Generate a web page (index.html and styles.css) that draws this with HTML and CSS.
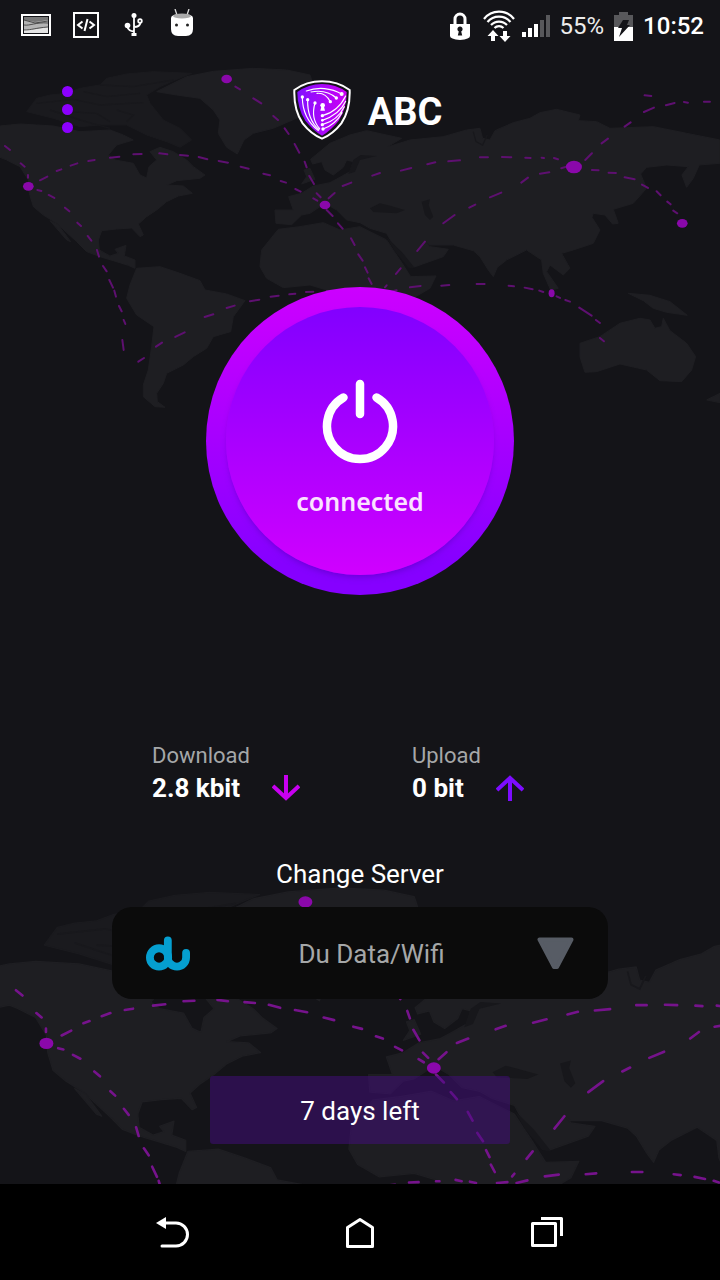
FILE: index.html
```html
<!DOCTYPE html>
<html lang="en">
<head>
<meta charset="utf-8">
<meta name="viewport" content="width=device-width, initial-scale=1">
<title>ABC</title>
<link rel="stylesheet" href="styles.css">
</head>
<body>
<div class="screen">
  <svg class="backdrop" viewBox="0 0 720 1280" preserveAspectRatio="xMidYMin slice" aria-hidden="true">
    <defs>
      <g id="world">
        <g class="land">
          <path opacity=".65" d="M80 155L110 115 150 105 200 100 240 85 300 75 320 55 380 42 460 35 575 40 520 62 480 80 440 105 450 130 490 180 540 205 575 240 540 262 500 245 440 225 380 195 300 195 240 200 160 175Z"/>
          <path d="M-50 208L0 198 60 192 110 195 160 198 240 215 330 210 370 225 400 240 350 255 325 285 345 300 400 310 420 345 440 354 447 320 470 300 450 275 480 262 520 275 560 300 580 320 615 345 600 355 530 362 500 375 550 378 577 400 535 408 500 425 470 450 440 470 415 492 430 525 420 530 395 504 350 507 305 512 295 540 298 570 330 588 355 580 345 568 378 556 373 588 405 600 405 625 385 616 340 602 300 590 260 575 230 545 170 490 130 465 100 440 88 400 85 360 60 320 20 300 0 292 -50 302Z"/>
          <path d="M150 482L200 540 212 545 175 495Z"/>
          <path d="M470 95L560 50 640 34 760 25 860 30 930 45 945 90 900 170 820 205 760 220 732 240 712 282 680 262 655 220 660 180 640 150 600 115 530 105Z"/>
          <path d="M410 625L480 620 540 640 600 662 615 690 680 702 735 722 700 770 692 815 640 830 620 865 580 890 550 915 500 940 490 970 470 1000 472 1025 495 1042 465 1040 430 1010 430 975 445 930 455 860 462 800 410 765 380 715 390 675Z"/>
          <path d="M835 508L900 500 970 488 1020 510 1080 500 1160 540 1200 600 1232 650 1308 648 1290 685 1230 720 1180 790 1080 790 1030 720 980 690 930 675 850 683 800 655 780 620 785 570Z"/>
          <path d="M825 450L880 450 866 410 905 400 940 378 990 368 1020 352 1050 335 1060 305 1040 300 1030 322 1000 345 975 330 965 305 938 312 932 298 990 250 1050 225 1100 212 1205 235 1160 262 1230 240 1330 230 1400 210 1440 205 1448 235 1470 240 1485 212 1540 188 1590 175 1620 158 1670 148 1740 165 1735 182 1790 185 1830 205 1960 200 2060 220 2160 240V310L2098 315 2080 355 2060 382 2046 345 2065 320 2000 315 1940 322 1922 342 1940 385 1900 430 1840 448 1855 490 1838 492 1815 465 1780 460 1776 472 1800 510 1780 550 1720 570 1685 580 1710 625 1690 645 1650 615 1640 635 1675 685 1652 690 1630 640 1625 600 1580 570 1520 600 1492 622 1480 650 1465 630 1440 590 1420 572 1360 555 1290 555 1272 540 1290 560 1345 568 1330 590 1240 622 1225 620 1180 555 1160 520 1110 505 1080 488 1040 480 1010 450 975 430 930 460 905 465 875 494 828 490Z"/>
          <path d="M905 372L945 358 930 325 912 330 920 350Z"/>
          <path d="M1740 850L1800 830 1860 790 1920 775 1950 780 1965 805 1985 800 1990 775 2010 812 2060 850 2087 890 2075 930 2045 965 1980 962 1940 930 1860 912 1790 935 1755 937 1740 890Z"/>
          <path d="M1885 700L1950 706 2010 725 2062 766 2000 757 1960 745 1930 722Z"/>
          <path d="M2120 1020L2160 1000V1028Z"/>
        </g>
        <g class="sea">
          <path d="M1110 445L1140 430 1165 436 1215 450 1190 460 1120 456Z"/>
          <path d="M1265 425L1290 418 1286 435 1300 470 1290 480 1275 465Z"/>
          <path d="M1160 532L1205 575 1245 625 1225 622 1185 575Z"/>
          <path d="M1060 300L1082 285 1130 288 1080 300 1065 335 1045 342Z"/>
        </g>
        <path class="streaks" d="M110 130L220 118 300 135 430 128M200 155L290 160 330 185M250 95L320 110 420 100M350 150L400 165 380 185M300 75L400 80 520 60M150 150L240 180 330 205M1420 215L1428 245 1448 255 1462 225"/>
        <path class="routes" d="M15 258l15 12M62 310l12 10M84 345v8M120 361l22-11M170 333l14-5M212 317l20-7M265 303l19-3M330 293l28-3M400 283l25-1M478 280l24 3M540 285l24 2M596 291l26 7M656 303l28 5M722 320l24 6M790 341l20 5M842 363l16 5M886 387l16 8M940 415l12 7M112 390l12 3M146 405l17 9M195 443l13 11M232 488l11 10M263 528l11 14M291 570l6 20M309 618l11 16M328 660l11 23M343 692l5 18M357 738l8 16M371 780l5 12M367 840l4 30M415 905l17-11M468 860l18-12M526 831l28-14M614 771l26-8M680 744l24-7M750 724l28-5M812 710l24-3M868 703l18-2M918 696l22-1M980 693h8M1025 690l14 3M1058 694l14 3M1120 697l24-2M1165 697l25-6M1230 682l32-4M1324 677l24-2M1430 672h24M1526 677l16 2M1574 683l24 5M1618 692l12 4M1670 709l10 5M1696 720l14 5M1738 743l37 24M1788 780l12 9M1800 834l12 10M706 80l14 8M760 115l24 15M820 168l14 12M854 205l12 17M884 252l14 26M914 305l6 17M928 348l14 24M950 400l12 12M980 450l18 18M1014 490l14 16M1053 535l11 20M1075 583l13 19M1095 622l8 16M1106 655l9 17M986 415l18-16M1028 378l26-10M1117 347l23-8M1203 332l31-8M1282 313l24-6M1345 304l35-3M1440 292h24M1506 291l28 1M1576 293l16 1M1625 293l7 1M1662 294l12 4M1756 300l20-20M1805 250l19-14M1874 200l18-13M1932 156l30-13M1998 136l26-7M2052 126l12 2M2112 125h18M1934 106l20 2M1776 330l20 1M1826 338l22 1M1874 352l30 6M1926 374l18 10M1970 394l12 12M2002 425l10 8M2020 452l12 8M1684 325l16-5M1620 341l28-4M1564 368l20-15M1470 412l34-14M1408 443l18-9M1330 490l34-25M1252 573l23-28M1188 642l14-17M1155 682l5-6"/>
        <g class="nodes">
          <ellipse cx="85" cy="379" rx="16" ry="13"/>
          <ellipse cx="680" cy="57" rx="16" ry="13"/>
          <ellipse cx="975" cy="435" rx="16" ry="13"/>
          <ellipse cx="1722" cy="321" rx="24" ry="19"/>
          <ellipse cx="1655" cy="700" rx="9" ry="12"/>
          <ellipse cx="2047" cy="490" rx="16" ry="13"/>
        </g>
      </g>
    </defs>
    <use class="map-top" href="#world" transform="translate(0 60) scale(.3333)"/>
    <use class="map-bottom" href="#world" transform="translate(9.4 877) scale(.4353 .439)"/>
  </svg>

  <div class="status">
    <div class="status-group notices">
      <svg width="30" height="22" viewBox="0 0 30 22"><path fill="#fff" d="M0 0h30v22H0z"/><path fill="#141418" d="M2 2h26v18H2z"/><path fill="#b4b4b4" d="M3 3h24v16H3z"/><path fill="#777" d="M3 3h24v3L14 8 3 6z"/><path fill="#e4e4e4" d="M3 16l13-1 11-2v6H3z"/><path fill="none" stroke="#333" stroke-width=".8" d="M3 6l11 3 13-2M3 11c6 1 12-3 24-2M3 16c8 0 11-2 24-3"/></svg>
      <svg width="26" height="26" viewBox="0 0 26 26" fill="none" stroke="#fff"><path stroke-width="2" d="M1 1h24v24H1z"/><path stroke-width="2" d="M9.500 9.500L5 13l4.500 3.500M16.500 9.500L21 13l-4.500 3.500M14.500 7l-3 12"/></svg>
      <svg width="20" height="24" viewBox="0 0 20 24" fill="none" stroke="#fff" stroke-width="1.800"><path d="M10 3v18M3 12.500c1 5 4 5.500 7 6M10 14c4 0 6-1 6.500-4.500"/><circle cx="10" cy="2.500" r="2.500" fill="#fff" stroke="none"/><circle cx="3.500" cy="12.500" r="2.800" fill="#fff" stroke="none"/><circle cx="16" cy="8" r="1.800"/><path fill="#fff" stroke="none" d="M7.500 20h5v3h-5z"/></svg>
      <svg width="24" height="28" viewBox="0 0 24 28"><path stroke="#ddd" stroke-width="1.300" d="M5 0l2 6M19 0l-2 6"/><path fill="#fff" d="M1 9q0-4 11-4t11 4v11q0 7-7 7H8q-7 0-7-7z"/><ellipse cx="12" cy="7" rx="9" ry="2.500" fill="#aaa"/><circle cx="6.500" cy="16" r="1.500" fill="#222"/><circle cx="17.500" cy="16" r="1.500" fill="#222"/></svg>
    </div>
    <div class="status-group system">
      <svg width="20" height="28" viewBox="0 0 20 28"><path fill="none" stroke="#fff" stroke-width="3" d="M5 14V7a5 5 0 0 1 10 0v7"/><path fill="#fff" d="M0 12h20v12q0 3-10 4Q0 27 0 24z"/><path fill="#141418" d="M8.800 19.500a2.600 2.600 0 1 1 2.400 0l1 4H7.800z"/></svg>
      <svg width="32" height="32" viewBox="0 0 32 32"><g fill="none" stroke="#fff" stroke-width="2.200"><path d="M1 9a19 19 0 0 1 30 0M4.500 12a15 15 0 0 1 23 0M8 15a11 11 0 0 1 16 0M11.500 18a6.500 6.500 0 0 1 9 0"/></g><path fill="#fff" d="M10 20l5.500 6H12v5H8v-5H4.500zM22 32l5.500-6H24v-5h-4v5h-3.500z"/></svg>
      <svg class="signal" width="28" height="22" viewBox="0 0 28 22"><path fill="#fff" d="M0 17h4v5H0zM6 13h4v9H6zM12 9h4v13h-4z"/><path fill="#58585b" d="M18 5h4v17h-4zM24 0h4v22h-4z"/></svg>
      <span class="battery-level">55%</span>
      <svg width="19" height="29" viewBox="0 0 19 29"><path fill="#58585b" d="M5 0h9v3h5v12H0V3h5z"/><path fill="#fff" d="M0 15h19v14H0z"/><path fill="#141418" d="M9 8h6l-2 5h3L5 25l3-9H4z"/></svg>
      <time class="clock">10:52</time>
    </div>
  </div>

  <header class="header">
    <button class="menu" type="button" aria-label="Menu"><span class="dot"></span><span class="dot"></span><span class="dot"></span></button>
    <div class="brand">
      <svg width="58" height="60" viewBox="0 0 174 180">
        <defs><linearGradient id="shield" x1="0" x2="1"><stop offset="0" stop-color="#8210ff"/><stop offset="1" stop-color="#cc00f5"/></linearGradient></defs>
        <path fill="#141418" stroke="#fff" stroke-width="6" d="M87 4Q134 4 170 30Q172 90 145 130 120 162 87 176 54 162 29 130 2 90 4 30 40 4 87 4Z"/>
        <path fill="url(#shield)" d="M87 12Q128 12 161 36 161 86 137 122 114 151 87 167 60 151 37 122 13 86 13 36 46 12 87 12Z"/>
        <g fill="none" stroke="#fff" stroke-width="3.500" stroke-linecap="round"><path d="M28 51C28 90 42 125 76 152M44 59C43 95 52 126 78 149M66 69C57 100 62 126 80 146M40 33C75 20 115 24 146 42M54 36C85 30 112 38 130 54M72 40C90 38 103 48 112 65M158 48C140 85 115 100 88 107M158 64C142 98 116 112 88 121M154 80C140 109 116 126 88 134M147 98C134 122 112 139 90 147"/></g>
        <g fill="#fff"><circle cx="28" cy="51" r="5"/><circle cx="44" cy="59" r="5"/><circle cx="66" cy="69" r="5"/><circle cx="146" cy="42" r="6"/><circle cx="130" cy="54" r="5"/><circle cx="112" cy="65" r="5"/><circle cx="88" cy="107" r="5"/><circle cx="88" cy="121" r="4"/><circle cx="88" cy="134" r="5"/><circle cx="90" cy="147" r="5"/><circle cx="89" cy="76" r="7"/><path d="M86 76h6l4 16H82z"/></g>
      </svg>
      <h1 class="title">ABC</h1>
    </div>
  </header>

  <main class="main">
    <button class="power" type="button">
      <span class="power-face">
        <svg width="76" height="86" viewBox="0 0 76 86" fill="none" stroke="#fff" stroke-width="8.500" stroke-linecap="round"><path d="M38 6v30M21.500 19.500a33 33 0 1 0 33 0"/></svg>
        <span class="power-label">connected</span>
      </span>
    </button>

    <dl class="stats">
      <div class="stat">
        <dt class="stat-name">Download</dt>
        <dd class="stat-value">2.8 kbit
          <svg width="28" height="26" viewBox="0 0 28 26" fill="none" stroke="#c800f0" stroke-width="4"><path d="M14 0v23M1 11l13 12 13-12"/></svg>
        </dd>
      </div>
      <div class="stat">
        <dt class="stat-name">Upload</dt>
        <dd class="stat-value">0 bit
          <svg width="28" height="26" viewBox="0 0 28 26" fill="none" stroke="#7d0cff" stroke-width="4"><path d="M14 26V3M1 15L14 3l13 12"/></svg>
        </dd>
      </div>
    </dl>

    <label class="server-label" for="server">Change Server</label>
    <div class="server">
      <svg width="44" height="35" viewBox="437 198 135 104" fill="none" stroke="#059fd0" stroke-width="24" stroke-linecap="round"><circle cx="477" cy="262" r="28"/><path d="M504 210v52a28 28 0 0 0 56 0v-14"/></svg>
      <select class="server-select" id="server"><option>Du Data/Wifi</option></select>
      <svg width="38" height="33" viewBox="0 0 38 33"><path fill="#575c65" stroke="#575c65" stroke-width="4" stroke-linejoin="round" d="M2.500 2.500h32L20 30h-3z"/></svg>
    </div>

    <button class="days" type="button">7 days left</button>
  </main>

  <nav class="nav">
    <button class="nav-button" type="button" aria-label="Back"><svg width="34" height="32" viewBox="0 0 34 32"><path fill="none" stroke="#fff" stroke-width="3" stroke-linecap="round" d="M8 7h12a11.500 11.500 0 0 1 0 23H6"/><path fill="#fff" d="M0 7l10-6v12z"/></svg></button>
    <button class="nav-button" type="button" aria-label="Home"><svg width="28" height="32" viewBox="0 0 28 32" fill="none" stroke="#fff" stroke-width="3" stroke-linejoin="round"><path d="M1.500 11.500L14 3.500l12.500 8v19h-25z"/></svg></button>
    <button class="nav-button" type="button" aria-label="Recent apps"><svg width="34" height="32" viewBox="0 0 34 32" fill="none" stroke="#fff" stroke-width="3" stroke-linejoin="round"><path d="M2.500 7.500h23v22h-23zM11 2.500h20.500V20"/></svg></button>
  </nav>
</div>
</body>
</html>
```

FILE: styles.css
```css
* { box-sizing: border-box; }

body {
  margin: 0;
  background: #141418;
  color: #fff;
  font-family: Roboto, "Noto Sans", sans-serif;
}

button, select {
  border: 0;
  color: inherit;
  font: inherit;
  cursor: pointer;
}

svg { display: block; flex: none; }

.screen {
  position: relative;
  min-height: 100vh;
  display: flex;
  flex-direction: column;
  overflow: hidden;
  isolation: isolate;
}

.backdrop {
  position: absolute;
  inset: 0;
  z-index: -1;
  width: 100%;
  height: 100%;
}

.map-top { color: #5e1070; }
.map-bottom { color: #76138c; }
.land { fill: #1e1e22; stroke: #1e1e22; stroke-width: 3; stroke-linejoin: round; }
.sea { fill: #17171b; }
.streaks { fill: none; stroke: #18181c; stroke-width: 4; }
.routes { fill: none; stroke: currentColor; stroke-width: 6; stroke-linecap: round; }
.nodes { fill: #8a08aa; }

.status {
  height: 50px;
  padding: 0 16px 0 21px;
  display: flex;
  align-items: center;
  justify-content: space-between;
}

.status-group { display: flex; align-items: center; }
.notices { gap: 22px; }
.notices svg:nth-child(3) { margin: 0 4px 0 3px; }
.notices svg:nth-child(4) { margin-bottom: 4px; }
.system { gap: 10px; padding-top: 2px; font-size: 24px; line-height: 30px; }
.system svg:nth-child(2) { margin-left: 3px; }
.signal { margin-left: -3px; }
.battery-level { color: #ececec; }
.clock { font-weight: 500; }

.header {
  padding: 30px 60px 0;
  display: grid;
  grid-template-columns: 1fr auto 1fr;
  align-items: center;
}

.menu {
  justify-self: start;
  padding: 0 2px 2px;
  display: flex;
  flex-direction: column;
  gap: 7px;
  background: none;
}

.dot {
  width: 11px;
  height: 11px;
  border-radius: 50%;
  background: #8c00ff;
}

.brand { display: flex; align-items: center; gap: 17px; padding-left: 15px; }

.title {
  margin: 0;
  padding-top: 4px;
  font-size: 38px;
  font-weight: 700;
  line-height: 56px;
}

.main {
  display: flex;
  flex-direction: column;
  align-items: center;
}

.power {
  width: 308px;
  height: 308px;
  margin-top: 147px;
  padding: 20px;
  border-radius: 50%;
  background: linear-gradient(#cc00ff, #c400ff 12%, #8600ff 90%);
}

.power-face {
  height: 100%;
  padding-top: 14px;
  display: flex;
  flex-direction: column;
  align-items: center;
  justify-content: center;
  gap: 20px;
  border-radius: 50%;
  background: linear-gradient(#8200ff, #d000ff);
  box-shadow: 0 4px 6px -2px #5000b088;
}

.power-label {
  color: #fbe2ff;
  font-family: "Noto Sans", sans-serif;
  font-size: 25px;
  font-weight: 600;
  line-height: 34px;
}

.stats {
  width: 100%;
  margin: 145px 0 0;
  padding: 0 48px 0 152px;
  display: grid;
  grid-template-columns: 1fr 1fr;
}

.stat-name {
  color: #a5a7a8;
  font-size: 22px;
  line-height: 32px;
}

.stat-value {
  margin: 0;
  display: flex;
  align-items: center;
  gap: 32px;
  font-size: 26px;
  font-weight: 700;
  line-height: 32px;
}

.server-label {
  margin-top: 54px;
  font-size: 26px;
  line-height: 32px;
}

.server {
  width: calc(100% - 224px);
  height: 92px;
  margin-top: 17px;
  padding: 0 33px 0 34px;
  display: flex;
  align-items: center;
  border-radius: 20px;
  background: #0b0b0b;
}

.server-select {
  flex: 1;
  height: 60px;
  padding: 2px 0 0 16px;
  appearance: none;
  background: transparent;
  color: #a5a7a8;
  font-size: 26px;
  text-align: center;
  text-align-last: center;
}

.days {
  width: 300px;
  height: 68px;
  margin: 77px 0 40px;
  padding: 2px 0 0;
  border-radius: 3px;
  background: rgba(68, 12, 128, .5);
  font-size: 26px;
}

.nav {
  height: 96px;
  margin-top: auto;
  display: flex;
  align-items: center;
  justify-content: center;
  gap: 67px;
  background: #000;
}

.nav-button {
  width: 120px;
  height: 96px;
  display: flex;
  align-items: center;
  justify-content: center;
  background: none;
}
```
